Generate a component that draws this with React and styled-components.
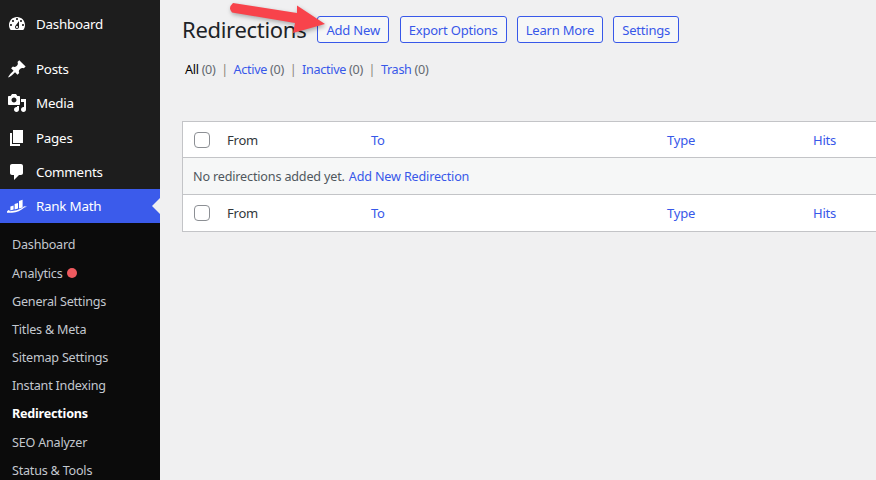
import React from 'react'
import styled, { createGlobalStyle } from 'styled-components'

const GlobalStyle = createGlobalStyle`
  html, body {
    margin: 0;
    height: 100%;
    background: #f0f0f1;
  }
  body {
    font-family: "Noto Sans", "Open Sans", sans-serif;
    font-size: 13px;
    overflow: hidden;
  }
`

const Page = styled.div`
  display: flex;
  width: 876px;
  height: 480px;
  overflow: hidden;
  position: relative;
`

const Sidebar = styled.aside`
  width: 160px;
  flex-shrink: 0;
  display: flex;
  flex-direction: column;
  background: #1d1d1d;
  padding-top: 7px;
`

const MenuItem = styled.div`
  position: relative;
  display: flex;
  align-items: center;
  height: ${({ $active }) => ($active ? 34 : 34.4)}px;
  flex-shrink: 0;
  padding-left: 7px;
  gap: 9px;
  color: #fff;
  font-size: 13.4px;
  letter-spacing: -0.25px;
  margin-bottom: ${({ $gap }) => $gap || 0}px;
  background: ${({ $active }) => ($active ? '#3b5beb' : 'transparent')};

  svg {
    width: 20px;
    height: 20px;
    fill: currentColor;
    flex-shrink: 0;
  }

  ${({ $active }) =>
    $active &&
    `
    &::after {
      content: '';
      position: absolute;
      right: 0;
      top: 50%;
      margin-top: -8px;
      border: 8px solid transparent;
      border-right-color: #f0f0f1;
      border-left-width: 0;
    }
  `}
`

const SubMenu = styled.div`
  flex: 1;
  display: flex;
  flex-direction: column;
  background: #0b0b0b;
  padding-top: 7.5px;
`

const SubItem = styled.div`
  display: flex;
  align-items: center;
  gap: 5px;
  height: 28.2px;
  flex-shrink: 0;
  padding-left: 12px;
  font-size: 12.6px;
  letter-spacing: -0.22px;
  color: ${({ $current }) => ($current ? '#fff' : '#c3c8cf')};
  font-weight: ${({ $current }) => ($current ? 700 : 400)};
`

const Dot = styled.span`
  width: 10px;
  height: 10px;
  border-radius: 50%;
  background: #ef5a5f;
`

const Main = styled.main`
  flex: 1;
  min-width: 0;
  overflow: hidden;
  padding: 16px 0 0 22px;
`

const HeadingRow = styled.div`
  display: flex;
  align-items: center;
  height: 27px;
`

const Title = styled.h1`
  margin: 0 11px 0 0;
  width: 124px;
  padding-bottom: 2px;
  font-size: 22px;
  font-weight: 400;
  letter-spacing: -0.3px;
  white-space: nowrap;
  color: #1d2327;
`

const ActionButton = styled.a`
  display: flex;
  align-items: center;
  justify-content: center;
  box-sizing: border-box;
  height: 27px;
  width: ${({ $w }) => $w}px;
  margin-right: 10.25px;
  border: 1px solid #3858e9;
  border-radius: 3px;
  background: #f6f7f7;
  color: #3858e9;
  font-size: 13px;
  letter-spacing: -0.2px;
  white-space: nowrap;
`

const Filters = styled.div`
  display: flex;
  align-items: center;
  height: 18px;
  margin: 17px 0 0 3px;
  font-size: 12.6px;
  letter-spacing: -0.3px;
  color: #646970;
  white-space: pre;
`

const FilterLink = styled.span`
  color: ${({ $current }) => ($current ? '#000' : '#3858e9')};
`

const Sep = styled.span`
  color: #8a8478;
  margin: 0 5.7px;
`

const Table = styled.div`
  width: 760px;
  margin-top: 43px;
  box-sizing: border-box;
  border: 1px solid #c3c4c7;
  background: #fff;
`

const HeadRow = styled.div`
  display: grid;
  grid-template-columns: 33px 144px 296px 146px 1fr;
  align-items: center;
  height: ${({ $h }) => $h}px;
  padding-left: 11px;
  font-size: 13px;
  letter-spacing: -0.2px;
`

const EmptyRow = styled.div`
  display: flex;
  align-items: center;
  height: 38px;
  box-sizing: border-box;
  padding-left: 10px;
  background: #f6f7f7;
  border-top: 1px solid #c3c4c7;
  border-bottom: 1px solid #c3c4c7;
  font-size: 12.6px;
  letter-spacing: -0.17px;
  color: #50575e;
  gap: 4px;
`

const Check = styled.span`
  display: block;
  box-sizing: border-box;
  width: 16px;
  height: 16px;
  border: 1px solid #8c8f94;
  border-radius: 4px;
  background: #fff;
`

const ColLabel = styled.span`
  color: ${({ $plain }) => ($plain ? '#32373c' : '#3858e9')};
`

const TextLink = styled.span`
  color: #3858e9;
`

const Arrow = styled.svg`
  position: absolute;
  left: 225px;
  top: 0;
  width: 110px;
  height: 45px;
  overflow: visible;
  filter: drop-shadow(1px 2px 2px rgba(0, 0, 0, 0.3));
`

const icons = {
  dashboard:
    'M3.76 16h12.48c1.1-1.37 1.76-3.11 1.76-5 0-4.42-3.58-8-8-8s-8 3.58-8 8c0 1.89.66 3.63 1.76 5zM10 4c.55 0 1 .45 1 1s-.45 1-1 1-1-.45-1-1 .45-1 1-1zM6 6c.55 0 1 .45 1 1s-.45 1-1 1-1-.45-1-1 .45-1 1-1zm8 0c.55 0 1 .45 1 1s-.45 1-1 1-1-.45-1-1 .45-1 1-1zm-5.37 5.55L12 7v6c0 1.1-.9 2-2 2s-2-.9-2-2c0-.57.24-1.08.63-1.45zM4 10c.55 0 1 .45 1 1s-.45 1-1 1-1-.45-1-1 .45-1 1-1zm12 0c.55 0 1 .45 1 1s-.45 1-1 1-1-.45-1-1 .45-1 1-1zm-5 3c0-.55-.45-1-1-1s-1 .45-1 1 .45 1 1 1 1-.45 1-1z',
  posts:
    'M10.44 3.02l1.82-1.82 6.36 6.35-1.83 1.82c-1.05-.68-2.48-.57-3.41.36l-.75.75c-.92.93-1.04 2.35-.35 3.41l-1.83 1.82-2.41-2.41-2.8 2.79c-.42.42-3.38 2.71-3.8 2.29s1.86-3.39 2.28-3.81l2.79-2.79L4.1 9.36l1.83-1.82c1.05.69 2.48.57 3.4-.36l.75-.75c.93-.92 1.05-2.35.36-3.41z',
  media:
    'M13 11V4c0-.55-.45-1-1-1h-1.67L9 1H5L3.67 3H2c-.55 0-1 .45-1 1v7c0 .55.45 1 1 1h10c.55 0 1-.45 1-1zM7 4.5c1.38 0 2.5 1.12 2.5 2.5S8.38 9.5 7 9.5 4.5 8.38 4.5 7 5.62 4.5 7 4.5zM14 6h5v10.5c0 1.38-1.12 2.5-2.5 2.5S14 17.88 14 16.5s1.12-2.5 2.5-2.5c.17 0 .34.02.5.05V9h-3V6zm-4 8.05V13h2v3.5c0 1.38-1.12 2.5-2.5 2.5S7 17.88 7 16.5 8.12 14 9.5 14c.17 0 .34.02.5.05z',
  pages: 'M6 15V2h10v13H6zm-1 1h8v2H3V5h2v11z',
  comments:
    'M5 2h9c1.1 0 2 .9 2 2v7c0 1.1-.9 2-2 2h-2l-5 5v-5H5c-1.1 0-2-.9-2-2V4c0-1.1.9-2 2-2z',
  rankmath:
    'M3.4 10.6l3.2-1v4l-3.2 1zM7.6 8l3.4-1v5.6l-3.4 1zM12 5l3.6-1.2v7.6L12 12.4zM0 15.6c.6-.9 1.1-1.5 2-1.6l1 1.2c4.5-.2 9-1.2 13-3.6l1-1.4 3 .6-2.6.8c-3.4 3-7.6 5-12.4 5.2H0z',
}

const Icon = ({ name }) => (
  <svg viewBox="0 0 20 20">
    <path d={icons[name]} />
  </svg>
)

const subItems = [
  'Dashboard',
  'Analytics',
  'General Settings',
  'Titles & Meta',
  'Sitemap Settings',
  'Instant Indexing',
  'Redirections',
  'SEO Analyzer',
  'Status & Tools',
]

const filters = ['Active', 'Inactive', 'Trash']

const TableHead = ({ height }) => (
  <HeadRow $h={height}>
    <Check />
    <ColLabel $plain>From</ColLabel>
    <ColLabel>To</ColLabel>
    <ColLabel>Type</ColLabel>
    <ColLabel>Hits</ColLabel>
  </HeadRow>
)

export default function App() {
  return (
    <Page>
      <GlobalStyle />
      <Sidebar>
        <MenuItem $gap={10.3}>
          <Icon name="dashboard" />
          Dashboard
        </MenuItem>
        <MenuItem>
          <Icon name="posts" />
          Posts
        </MenuItem>
        <MenuItem>
          <Icon name="media" />
          Media
        </MenuItem>
        <MenuItem>
          <Icon name="pages" />
          Pages
        </MenuItem>
        <MenuItem>
          <Icon name="comments" />
          Comments
        </MenuItem>
        <MenuItem $active>
          <Icon name="rankmath" />
          Rank Math
        </MenuItem>
        <SubMenu>
          {subItems.map((item) => (
            <SubItem key={item} $current={item === 'Redirections'}>
              {item}
              {item === 'Analytics' && <Dot />}
            </SubItem>
          ))}
        </SubMenu>
      </Sidebar>

      <Main>
        <HeadingRow>
          <Title>Redirections</Title>
          <ActionButton $w={72.4}>Add New</ActionButton>
          <ActionButton $w={107}>Export Options</ActionButton>
          <ActionButton $w={86}>Learn More</ActionButton>
          <ActionButton $w={66}>Settings</ActionButton>
        </HeadingRow>

        <Filters>
          <FilterLink $current>All</FilterLink> (0)
          {filters.map((name) => (
            <React.Fragment key={name}>
              <Sep>|</Sep>
              <FilterLink>{name}</FilterLink> (0)
            </React.Fragment>
          ))}
        </Filters>

        <Table>
          <TableHead height={35} />
          <EmptyRow>
            No redirections added yet.
            <TextLink>Add New Redirection</TextLink>
          </EmptyRow>
          <TableHead height={36} />
        </Table>
      </Main>

      <Arrow viewBox="0 0 110 45">
        <path
          d="M8 3 L72 13 L72 5.5 L100 24 L68 33 L70 23 L7 12.5 Q2.5 8 8 3 Z"
          fill="#f8434b"
        />
      </Arrow>
    </Page>
  )
}
